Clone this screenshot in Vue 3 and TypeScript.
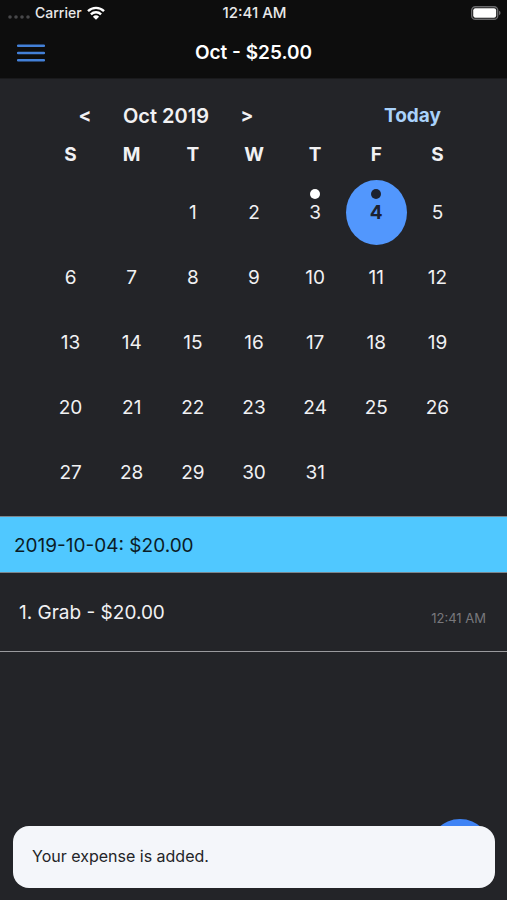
<script setup lang="ts">
import { computed, ref } from 'vue'

interface Day {
  date: number
  marked: boolean
}

interface Expense {
  id: number
  name: string
  amount: number
  time: string
}

const weekdays = [
  { short: 'S', full: 'Sunday' },
  { short: 'M', full: 'Monday' },
  { short: 'T', full: 'Tuesday' },
  { short: 'W', full: 'Wednesday' },
  { short: 'T', full: 'Thursday' },
  { short: 'F', full: 'Friday' },
  { short: 'S', full: 'Saturday' },
]

const markedDates = [3, 4]
const firstWeekday = 2
const daysInMonth = 31
const today = 4
const selected = ref<number>(today)

const weeks = computed<(Day | null)[][]>(() => {
  const cells: (Day | null)[] = Array.from({ length: firstWeekday }, () => null)
  for (let date = 1; date <= daysInMonth; date++) {
    cells.push({ date, marked: markedDates.includes(date) })
  }
  while (cells.length % 7 !== 0) cells.push(null)
  const rows: (Day | null)[][] = []
  for (let i = 0; i < cells.length; i += 7) rows.push(cells.slice(i, i + 7))
  return rows
})

const expenses: Expense[] = [{ id: 1, name: 'Grab', amount: 20, time: '12:41 AM' }]

const selectedLabel = computed(() => `2019-10-${String(selected.value).padStart(2, '0')}`)
const money = (value: number): string => `$${value.toFixed(2)}`
</script>

<template>
  <div class="screen">
    <header class="top">
      <div class="status">
        <div class="carrier">
          <svg class="signal" viewBox="0 0 22 4" aria-hidden="true">
            <circle cx="2" cy="2" r="1.8" />
            <circle cx="8" cy="2" r="1.8" />
            <circle cx="14" cy="2" r="1.8" />
            <circle cx="20" cy="2" r="1.8" />
          </svg>
          <span>Carrier</span>
          <svg class="wifi" viewBox="0 0 18 14" aria-hidden="true">
            <path d="M1 5.2a11.4 11.4 0 0 1 16 0" />
            <path d="M3.9 8.3a7.3 7.3 0 0 1 10.2 0" />
            <path class="wifi-tip" d="M5.9 10.7a4.5 4.5 0 0 1 6.2 0L9 13.8z" />
          </svg>
        </div>
        <span class="clock">12:41 AM</span>
        <svg class="battery" viewBox="0 0 30 14" aria-hidden="true">
          <rect class="battery-case" x="0.7" y="0.7" width="26" height="12.6" rx="3.6" />
          <rect class="battery-fill" x="2.2" y="2.2" width="23" height="9.6" rx="2.2" />
          <path class="battery-cap" d="M28 4.8q1.6.6 1.6 2.2T28 9.2z" />
        </svg>
      </div>
      <div class="bar">
        <button class="menu" type="button" aria-label="Menu">
          <svg viewBox="0 0 28 18" aria-hidden="true">
            <path d="M1 1.8h26M1 9h26M1 16.2h26" />
          </svg>
        </button>
        <h1 class="title">Oct - $25.00</h1>
      </div>
    </header>

    <main>
      <section class="calendar" aria-label="Calendar">
        <div class="month">
          <div class="pager">
            <button class="step" type="button" aria-label="Previous month">&lt;</button>
            <h2 class="month-name">Oct 2019</h2>
            <button class="step" type="button" aria-label="Next month">&gt;</button>
          </div>
          <button class="today" type="button" @click="selected = today">Today</button>
        </div>
        <table class="days">
          <thead>
            <tr>
              <th v-for="day in weekdays" :key="day.full" scope="col" :abbr="day.full">
                {{ day.short }}
              </th>
            </tr>
          </thead>
          <tbody>
            <tr v-for="(week, row) in weeks" :key="row">
              <td v-for="(day, col) in week" :key="col">
                <button
                  v-if="day"
                  type="button"
                  class="day"
                  :class="{ selected: day.date === selected, marked: day.marked }"
                  @click="selected = day.date"
                >
                  {{ day.date }}
                </button>
              </td>
            </tr>
          </tbody>
        </table>
      </section>

      <h2 class="total">{{ selectedLabel }}: $20.00</h2>
      <ul class="expenses">
        <li v-for="(item, index) in expenses" :key="item.id" class="expense">
          <span>{{ index + 1 }}. {{ item.name }} - {{ money(item.amount) }}</span>
          <time class="time">{{ item.time }}</time>
        </li>
      </ul>
    </main>

    <button class="add" type="button" aria-label="Add expense"></button>
    <div class="toast" role="status">Your expense is added.</div>
  </div>
</template>

<style>
body {
  margin: 0;
  background: #232428;
}
</style>

<style scoped>
.screen {
  min-height: 100vh;
  background: #232428;
  color: #f1f1f3;
  font-family: Inter, 'Liberation Sans', sans-serif;
  font-size: 19px;
  line-height: 24px;
}

button {
  margin: 0;
  padding: 0;
  border: 0;
  background: none;
  color: inherit;
  font: inherit;
  cursor: pointer;
}

h1,
h2 {
  margin: 0;
  font-size: inherit;
}

.top {
  background: #0d0d0d;
  border-bottom: 1px solid #1a1a1c;
}

.status {
  display: grid;
  grid-template-columns: 1fr auto 1fr;
  align-items: center;
  height: 26px;
  padding: 0 6px 0 8px;
  color: #e8e8e8;
  font-size: 14px;
  font-weight: 500;
}

.clock {
  font-size: 15px;
}

.carrier {
  display: flex;
  align-items: center;
  gap: 5px;
}

.signal {
  width: 22px;
  height: 4px;
  margin-top: 8px;
  fill: #48484a;
}

.wifi {
  width: 18px;
  height: 14px;
  fill: none;
  stroke: #ffffff;
  stroke-width: 2.4;
}

.wifi-tip {
  fill: #ffffff;
  stroke: none;
}

.battery {
  justify-self: end;
  width: 30px;
  height: 14px;
}

.battery-case {
  fill: none;
  stroke: #6a6a6c;
  stroke-width: 1.4;
}

.battery-fill {
  fill: #ffffff;
}

.battery-cap {
  fill: #6a6a6c;
}

.bar {
  display: grid;
  grid-template-columns: 1fr auto 1fr;
  align-items: center;
  box-sizing: border-box;
  height: 52px;
  padding: 2px 17px 0;
}

.menu {
  justify-self: start;
  display: flex;
}

.menu svg {
  width: 28px;
  height: 18px;
  fill: none;
  stroke: #4380d8;
  stroke-width: 2.4;
  stroke-linecap: round;
}

.title {
  color: #ffffff;
  font-weight: 600;
}

.calendar {
  padding: 25px 39px 11px 40px;
}

.month {
  display: flex;
  align-items: center;
  justify-content: space-between;
  padding: 0 27px 0 38px;
  font-weight: 700;
}

.pager {
  display: flex;
  align-items: center;
  gap: 31px;
}

.step {
  width: 14px;
}

.month-name {
  font-size: 20px;
  font-weight: 600;
}

.today {
  color: #a9d2fb;
}

.days {
  width: 100%;
  margin-top: 14px;
  border-collapse: collapse;
  table-layout: fixed;
}

th {
  height: 38px;
  padding: 0 0 12px;
  box-sizing: border-box;
  vertical-align: middle;
  font-weight: 700;
}

td {
  height: 65px;
  padding: 0;
  text-align: center;
}

.day {
  position: relative;
  display: block;
  width: 100%;
  height: 65px;
  padding-top: 1px;
  border-radius: 50%;
}

.marked::before {
  content: '';
  position: absolute;
  top: 9px;
  left: calc(50% - 5px);
  width: 10px;
  height: 10px;
  border-radius: 50%;
  background: #ffffff;
}

.selected {
  background: #5297fd;
  color: #1c2230;
  font-weight: 700;
}

.selected::before {
  background: #1c2230;
}

.total {
  padding: 17px 14px 14px;
  border: solid #7b858c;
  border-width: 1px 0;
  background: #50c8ff;
  color: #0b1c26;
  font-weight: 400;
}

.expenses {
  margin: 0;
  padding: 0;
  list-style: none;
}

.expense {
  display: flex;
  align-items: center;
  justify-content: space-between;
  padding: 28px 21px 26px 19px;
  border-bottom: 1px solid #9a9a9e;
}

.time {
  padding-top: 9px;
  color: #78787c;
  font-size: 13px;
  line-height: 14px;
}

.add {
  position: fixed;
  right: 15px;
  bottom: 17px;
  width: 64px;
  height: 64px;
  border-radius: 50%;
  background: #3f83f5;
}

.toast {
  position: fixed;
  right: 12px;
  bottom: 12px;
  left: 13px;
  padding: 18px 19px 20px;
  border-radius: 16px;
  background: #f4f6fa;
  color: #232428;
  font-size: 16px;
}
</style>
